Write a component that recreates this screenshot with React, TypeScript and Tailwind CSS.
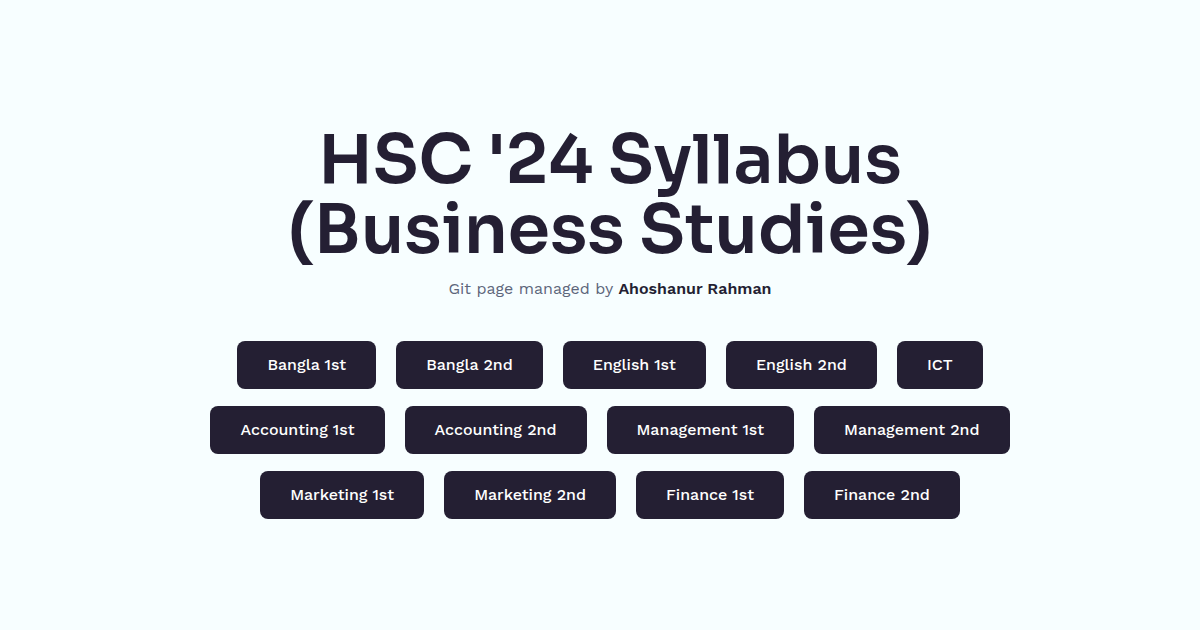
const rows: string[][] = [
  ["Bangla 1st", "Bangla 2nd", "English 1st", "English 2nd", "ICT"],
  ["Accounting 1st", "Accounting 2nd", "Management 1st", "Management 2nd"],
  ["Marketing 1st", "Marketing 2nd", "Finance 1st", "Finance 2nd"],
];

export default function App() {
  return (
    <main className="flex min-h-screen flex-col items-center justify-center bg-[#f7feff] pt-[14px] pl-5 font-['Work_Sans','Inter',sans-serif]">
      <h1 className="text-center font-['Sora','Inter',sans-serif] text-[68px] leading-[70px] font-semibold text-[#241f33]">
        HSC '24 Syllabus
        <br />
        (Business Studies)
      </h1>
      <p className="mt-3 text-base leading-6 text-[#5d667b]">
        Git page managed by <strong className="font-semibold text-[#241f33]">Ahoshanur Rahman</strong>
      </p>
      <nav aria-label="Subjects" className="mt-10 flex flex-col items-center gap-[17px]">
        {rows.map((row) => (
          <div key={row[0]} className="flex flex-wrap justify-center gap-5">
            {row.map((subject) => (
              <a
                key={subject}
                href="#"
                className="rounded-lg bg-[#241f33] px-[30px] py-3 text-base leading-6 font-medium text-white"
              >
                {subject}
              </a>
            ))}
          </div>
        ))}
      </nav>
    </main>
  );
}
